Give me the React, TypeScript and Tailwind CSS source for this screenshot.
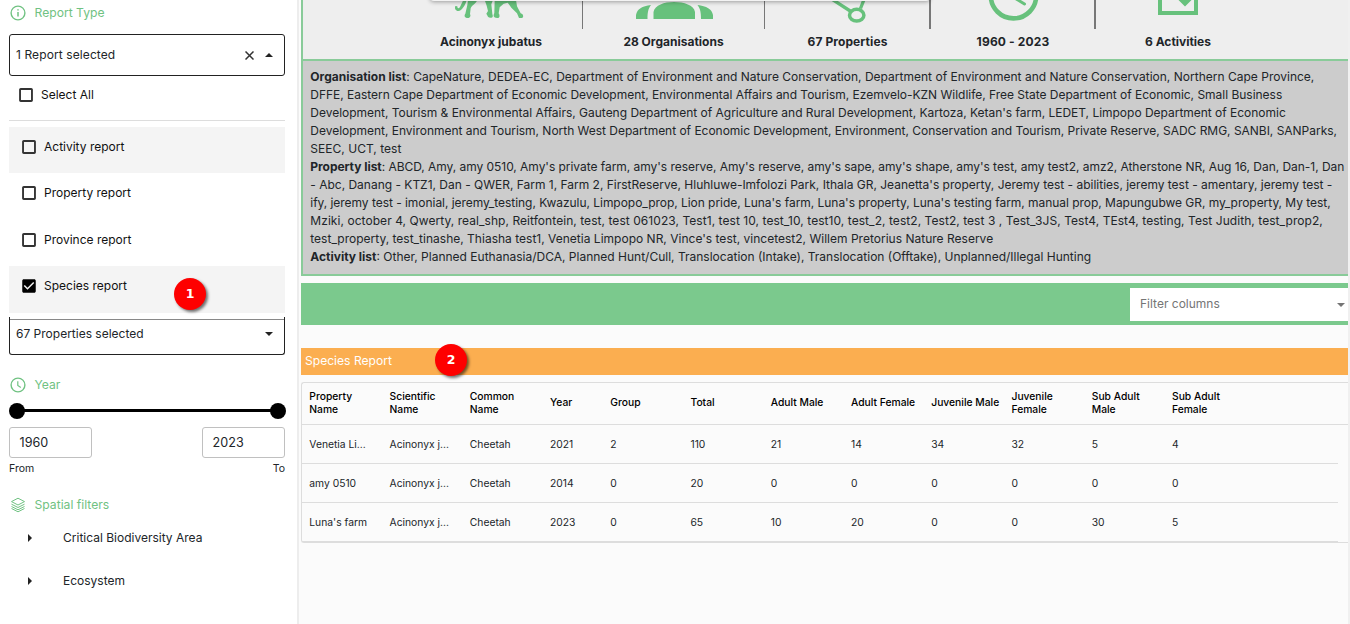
import React from "react";

function Box({ checked = false }: { checked?: boolean }) {
  return (
    <svg className="size-[18px] shrink-0" viewBox="0 0 24 24" fill={checked ? "#000" : "#333"}>
      {checked ? (
        <path d="M19 3H5c-1.11 0-2 .9-2 2v14c0 1.1.89 2 2 2h14c1.11 0 2-.9 2-2V5c0-1.1-.89-2-2-2zm-9 14l-5-5 1.41-1.41L10 14.17l7.59-7.59L19 8l-9 9z" />
      ) : (
        <path d="M18.700 5.300v13.400H5.300V5.300h13.400m.3-2.500H5c-1.200 0-2.200 1-2.200 2.200v14c0 1.200 1 2.200 2.200 2.200h14c1.200 0 2.200-1 2.200-2.200V5c0-1.200-1-2.200-2.200-2.200z" />
      )}
    </svg>
  );
}

function Caret({ up = false, className = "" }: { up?: boolean; className?: string }) {
  return (
    <svg className={`h-1 w-2 shrink-0 ${className}`} viewBox="0 0 8 4" fill="currentColor">
      <path d={up ? "M0 4L4 0l4 4z" : "M0 0h8L4 4z"} />
    </svg>
  );
}

function Heading({ icon, children }: { icon: React.ReactNode; children: React.ReactNode }) {
  return (
    <div className="flex h-5 items-center gap-2 pl-[10px] text-[12.15px] text-[#70c282]">
      <svg className="size-4 shrink-0" viewBox="0 0 16 16" fill="none" stroke="#70c282" strokeWidth="1.4">
        {icon}
      </svg>
      <span className="pl-[0.5px]">{children}</span>
    </div>
  );
}

function Marker({ children, className }: { children: React.ReactNode; className: string }) {
  return (
    <div
      className={`absolute flex size-8 items-center justify-center rounded-full bg-[#fe0000] font-['DejaVu_Sans',sans-serif] text-[12.5px] font-bold text-white shadow-[2px_2px_3px_rgba(0,0,0,0.55)] ${className}`}
    >
      {children}
    </div>
  );
}

function Sidebar() {
  const reports = ["Activity report", "Property report", "Province report", "Species report"];
  return (
    <aside className="flex w-[299px] shrink-0 flex-col border-r-2 border-[#ededed] bg-white pt-[3px]">
      <Heading
        icon={
          <>
            <circle cx="8" cy="8" r="6.9" />
            <path d="M8 7v4.500M8 4.200v1.400" strokeWidth="1.500" />
          </>
        }
      >
        Report Type
      </Heading>
      <div className="mt-[11px] ml-[9px] flex h-[42px] w-[276px] items-center rounded-[3px] border border-[#222] pl-[6px]">
        <span className="flex-1 tracking-[0.1px]">1 Report selected</span>
        <svg className="mr-[11px] size-[9px]" viewBox="0 0 9 9" stroke="#333" strokeWidth="1.5">
          <path d="M.5.5l8 8M8.500.5l-8 8" />
        </svg>
        <Caret up className="mr-[11px] text-[#222]" />
      </div>
      <div className="ml-[9px] flex h-[45px] w-[276px] items-start gap-[6px] border-b border-[#ddd] pt-[10px] pl-2 text-[#111]">
        <Box />
        <span>Select All</span>
      </div>
      <div className="mt-[6px] ml-[9px] flex w-[276px] flex-col text-[#111]">
        {reports.map((r, i) => (
          <div
            key={r}
            className={`relative flex h-[46.4px] items-start gap-[6px] pt-[11px] pl-[11px] ${i % 3 === 0 ? "bg-[#f4f4f4]" : ""}`}
          >
            <Box checked={i === 3} />
            <span>{r}</span>
            {i === 3 && <Marker className="top-[11.400px] left-[165px]">1</Marker>}
          </div>
        ))}
      </div>
      <div className="mt-[4.4px] ml-[9px] flex h-[38px] w-[276px] flex-col rounded-b-[3px] border border-t-0 border-[#222] pt-[2px]">
        <div className="h-px bg-[#888]" />
        <div className="flex h-[29px] items-center justify-between pr-[11px] pl-[6px]">
          <span className="-mt-px">67 Properties selected</span>
          <Caret className="text-[#222]" />
        </div>
      </div>
      <div className="mt-5">
        <Heading
          icon={
            <>
              <circle cx="8" cy="8" r="6.9" />
              <path d="M7.800 4.200v4.300l3 2" strokeWidth="1.200" />
            </>
          }
        >
          Year
        </Heading>
      </div>
      <div className="mt-2 ml-[9px] flex h-4 w-[277px] items-center">
        <div className="size-4 rounded-full bg-black" />
        <div className="-mx-1 h-[3px] flex-1 bg-black" />
        <div className="size-4 rounded-full bg-black" />
      </div>
      <div className="mt-2 ml-[9px] flex w-[276px] justify-between text-[12.6px]">
        {["1960", "2023"].map((y) => (
          <div key={y} className="flex h-[31px] w-[83px] items-center rounded-[3px] border border-[#c0c0c0] pt-px pl-[9.6px]">
            {y}
          </div>
        ))}
      </div>
      <div className="mt-[3px] ml-[9px] flex h-4 w-[276px] items-center justify-between text-[10.5px]">
        <span>From</span>
        <span>To</span>
      </div>
      <div className="mt-[18px]">
        <Heading
          icon={
            <path
              d="M8 1.200l6.500 3.400L8 8 1.500 4.600zM1.500 7.200L8 10.500l6.500-3.300M1.500 9.500L8 12.800l6.500-3.300M1.500 11.500L8 14.800l6.500-3.300"
              strokeWidth="1"
            />
          }
        >
          Spatial filters
        </Heading>
      </div>
      <div className="flex flex-col gap-[13px] pt-[8px]">
        {["Critical Biodiversity Area", "Ecosystem"].map((t) => (
          <div key={t} className="flex h-[30px] items-center pl-7">
            <svg className="mr-[31px] h-2 w-1" viewBox="0 0 4 8" fill="#222">
              <path d="M0 0l4 4-4 4z" />
            </svg>
            {t}
          </div>
        ))}
      </div>
    </aside>
  );
}

function Stat({ label, width, rule = "", children }: { label: string; width: string; rule?: string; children: React.ReactNode }) {
  return (
    <div className={`flex shrink-0 flex-col ${width}`}>
      <div className={`flex h-[29px] justify-center ${rule}`}>{children}</div>
      <div className="flex h-[26px] items-center justify-center pr-px font-bold">{label}</div>
    </div>
  );
}

const columns: { title: string; width: string; cells: string[] }[] = [
  { title: "Property Name", width: "w-[80.25px] pr-5", cells: ["Venetia Li...", "amy 0510", "Luna's farm"] },
  { title: "Scientific Name", width: "w-[80.25px] pr-5", cells: ["Acinonyx j...", "Acinonyx j...", "Acinonyx j..."] },
  { title: "Common Name", width: "w-[80.25px] pr-5", cells: ["Cheetah", "Cheetah", "Cheetah"] },
  { title: "Year", width: "w-[60.2px]", cells: ["2021", "2014", "2023"] },
  { title: "Group", width: "w-[80.25px]", cells: ["2", "0", "0"] },
  { title: "Total", width: "w-[80.25px]", cells: ["110", "20", "65"] },
  { title: "Adult Male", width: "w-[80.25px]", cells: ["21", "0", "10"] },
  { title: "Adult Female", width: "w-[80.25px]", cells: ["14", "0", "20"] },
  { title: "Juvenile Male", width: "w-[80.25px]", cells: ["34", "0", "0"] },
  { title: "Juvenile Female", width: "w-[80.25px] pr-5", cells: ["32", "0", "0"] },
  { title: "Sub Adult Male", width: "w-[80.25px] pr-5", cells: ["5", "0", "30"] },
  { title: "Sub Adult Female", width: "w-[80.25px] pr-5", cells: ["4", "0", "5"] },
];

const lists: { name: string; lines: [text: string, tracking: string][] }[] = [
  {
    name: "Organisation list",
    lines: [
      ["CapeNature, DEDEA-EC, Department of Environment and Nature Conservation, Department of Environment and Nature Conservation, Northern Cape Province,", "tracking-[0.012px]"],
      ["DFFE, Eastern Cape Department of Economic Development, Environmental Affairs and Tourism, Ezemvelo-KZN Wildlife, Free State Department of Economic, Small Business", "tracking-[-0.019px]"],
      ["Development, Tourism & Environmental Affairs, Gauteng Department of Agriculture and Rural Development, Kartoza, Ketan's farm, LEDET, Limpopo Department of Economic", "tracking-[-0.017px]"],
      ["Development, Environment and Tourism, North West Department of Economic Development, Environment, Conservation and Tourism, Private Reserve, SADC RMG, SANBI, SANParks,", "tracking-[-0.023px]"],
      ["SEEC, UCT, test", "tracking-[0.03px]"],
    ],
  },
  {
    name: "Property list",
    lines: [
      ["ABCD, Amy, amy 0510, Amy's private farm, amy's reserve, Amy's reserve, amy's sape, amy's shape, amy's test, amy test2, amz2, Atherstone NR, Aug 16, Dan, Dan-1, Dan", "tracking-[-0.042px]"],
      ["- Abc, Danang - KTZ1, Dan - QWER, Farm 1, Farm 2, FirstReserve, Hluhluwe-Imfolozi Park, Ithala GR, Jeanetta's property, Jeremy test - abilities, jeremy test - amentary, jeremy test -", "tracking-[-0.008px]"],
      ["ify, jeremy test - imonial, jeremy_testing, Kwazulu, Limpopo_prop, Lion pride, Luna's farm, Luna's property, Luna's testing farm, manual prop, Mapungubwe GR, my_property, My test,", "tracking-[-0.038px]"],
      ["Mziki, october 4, Qwerty, real_shp, Reitfontein, test, test 061023, Test1, test 10, test_10, test10, test_2, test2, Test2, test 3 , Test_3JS, Test4, TEst4, testing, Test Judith, test_prop2,", "tracking-[0.058px]"],
      ["test_property, test_tinashe, Thiasha test1, Venetia Limpopo NR, Vince's test, vincetest2, Willem Pretorius Nature Reserve", "tracking-[0.01px]"],
    ],
  },
  {
    name: "Activity list",
    lines: [
      ["Other, Planned Euthanasia/DCA, Planned Hunt/Cull, Translocation (Intake), Translocation (Offtake), Unplanned/Illegal Hunting", ""],
    ],
  },
];

export default function App() {
  return (
    <div className="flex h-[624px] w-[1350px] overflow-hidden bg-[#fbfbfb] font-['Inter',sans-serif] text-[12px] leading-[18px] text-[#212529]">
      <Sidebar />
      <main className="flex w-[1051px] flex-col border-r-2 border-[#f0f0f0] pl-[2px]">
        <section className="relative flex h-[61px] shrink-0 border-b-2 border-l-2 border-[#89cb99] bg-[#eee] pl-[97px]">
          <Stat label="Acinonyx jubatus" width="w-[183px]" rule="border-r border-[#777] pr-[3px]">
            <svg className="h-[24px] w-[80px]" viewBox="0 0 240 72" fill="#67c17c">
              <path d="M40 0h10C46 16 36 32 25 33c-8 0-12-7-9-15l6 1c0 7 4 8 8 2z" />
              <path d="M54 0h28c-4 11-17 16-20 25l-2 17c3 5 1 12-6 12-9 0-13-6-8-13l6-26z" />
              <path d="M104 0h25l-5 13 3 29c3 7 1 12-5 11-8 0-9-5-13-12l5-8-4-16z" />
              <path d="M134 0h64l3 19 11 21c8 1 10 13 4 14h-9l-6-14-17-17-11-15-12 3-12 11-3 18c4 6 4 14-4 14-12 0-13-7-9-15z" />
            </svg>
          </Stat>
          <Stat label="28 Organisations" width="w-[182px]" rule="border-r border-[#777]">
            <svg className="h-[24px] w-[79px]" viewBox="0 0 79 24" fill="#67c17c">
              <path d="M2 19v-4C3 9 8 6 17 5c-3 4-3.500 8-3.500 14zM19.500 19V12C21 5 30 2 40 2s20 3 21 10v7zM67 19c0-6-.5-10-3.500-14 9 1 14.500 4 15.500 10v4z" />
            </svg>
          </Stat>
          <Stat label="67 Properties" width="w-[166px] tracking-[0.1px]" rule="border-r-2 border-[#777]">
            <svg className="h-[24px] w-[60px]" viewBox="0 0 60 24" fill="none" stroke="#67c17c" strokeWidth="3.500">
              <path d="M10-4l24 15.500M48-3l-4.500 11.500" strokeWidth="3.300" />
              <ellipse cx="39.700" cy="15.200" rx="7.200" ry="5.900" />
            </svg>
          </Stat>
          <Stat label="1960 - 2023" width="w-[165px] tracking-[0.15px]" rule="border-r-2 border-[#777]">
            <svg className="h-[24px] w-[54px]" viewBox="0 0 54 24" fill="none" stroke="#67c17c" strokeWidth="4.600">
              <circle cx="27.500" cy="-4.300" r="22.700" />
              <path d="M27-3l11.500 7" strokeLinecap="round" strokeWidth="3" />
            </svg>
          </Stat>
          <Stat label="6 Activities" width="w-[165px]">
            <svg className="mr-px h-[24px] w-[44px]" viewBox="0 0 44 24" fill="#67c17c">
              <path d="M2-5h4v16h32V-5h4v20H2zM22.500 0h13l-6.500 6.500z" />
            </svg>
          </Stat>
          <div className="absolute top-[-8px] left-[127px] h-[9px] w-[500px] rounded-b bg-[#f3f3f3] shadow-[0_1px_4px_rgba(0,0,0,0.35)]" />
        </section>
        <section className="flex h-[215px] shrink-0 flex-col border-b-2 border-l-2 border-[#89cb99] bg-[#ccc] pt-[7px] pl-[7.3px] whitespace-nowrap">
          {lists.map((l) => (
            <div key={l.name}>
              {l.lines.map(([line, tracking], i) => (
                <p key={line} className={tracking}>
                  {i === 0 && (
                    <>
                      <strong>{l.name}</strong>:{" "}
                    </>
                  )}
                  {line}
                </p>
              ))}
            </div>
          ))}
        </section>
        <div className="mt-[7px] flex h-[42px] shrink-0 justify-end bg-[#7bc98d] pt-[5px]">
          <div className="flex h-[33px] w-[218px] items-center justify-between bg-white pr-[3px] pl-[10px] text-[#757575]">
            <span className="-mt-px">Filter columns</span>
            <Caret />
          </div>
        </div>
        <div className="relative mt-[23px] flex h-[27px] shrink-0 items-center bg-[#fbae50] pb-px pl-1 text-[12.1px] text-white">
          Species Report
          <Marker className="-top-1 left-[134px]">2</Marker>
        </div>
        <div className="mt-[7px] flex h-[161px] shrink-0 flex-col rounded-l-[3px] border border-r-0 border-[#ddd] text-[10.3px]">
          <div className="flex h-[42px] shrink-0 items-center border-b border-[#ddd] pb-[2px] pl-[7.3px] leading-[13px] font-medium text-black">
            {columns.map((c) => (
              <div key={c.title} className={`shrink-0 ${c.width}`}>
                {c.title}
              </div>
            ))}
          </div>
          {[0, 1, 2].map((r) => (
            <div key={r} className="mr-[10px] flex h-[39px] shrink-0 items-center border-b border-[#ddd] pl-[7.3px]">
              {columns.map((c) => (
                <div key={c.title} className={`shrink-0 whitespace-nowrap ${c.width}`}>
                  {c.cells[r]}
                </div>
              ))}
            </div>
          ))}
        </div>
      </main>
    </div>
  );
}
